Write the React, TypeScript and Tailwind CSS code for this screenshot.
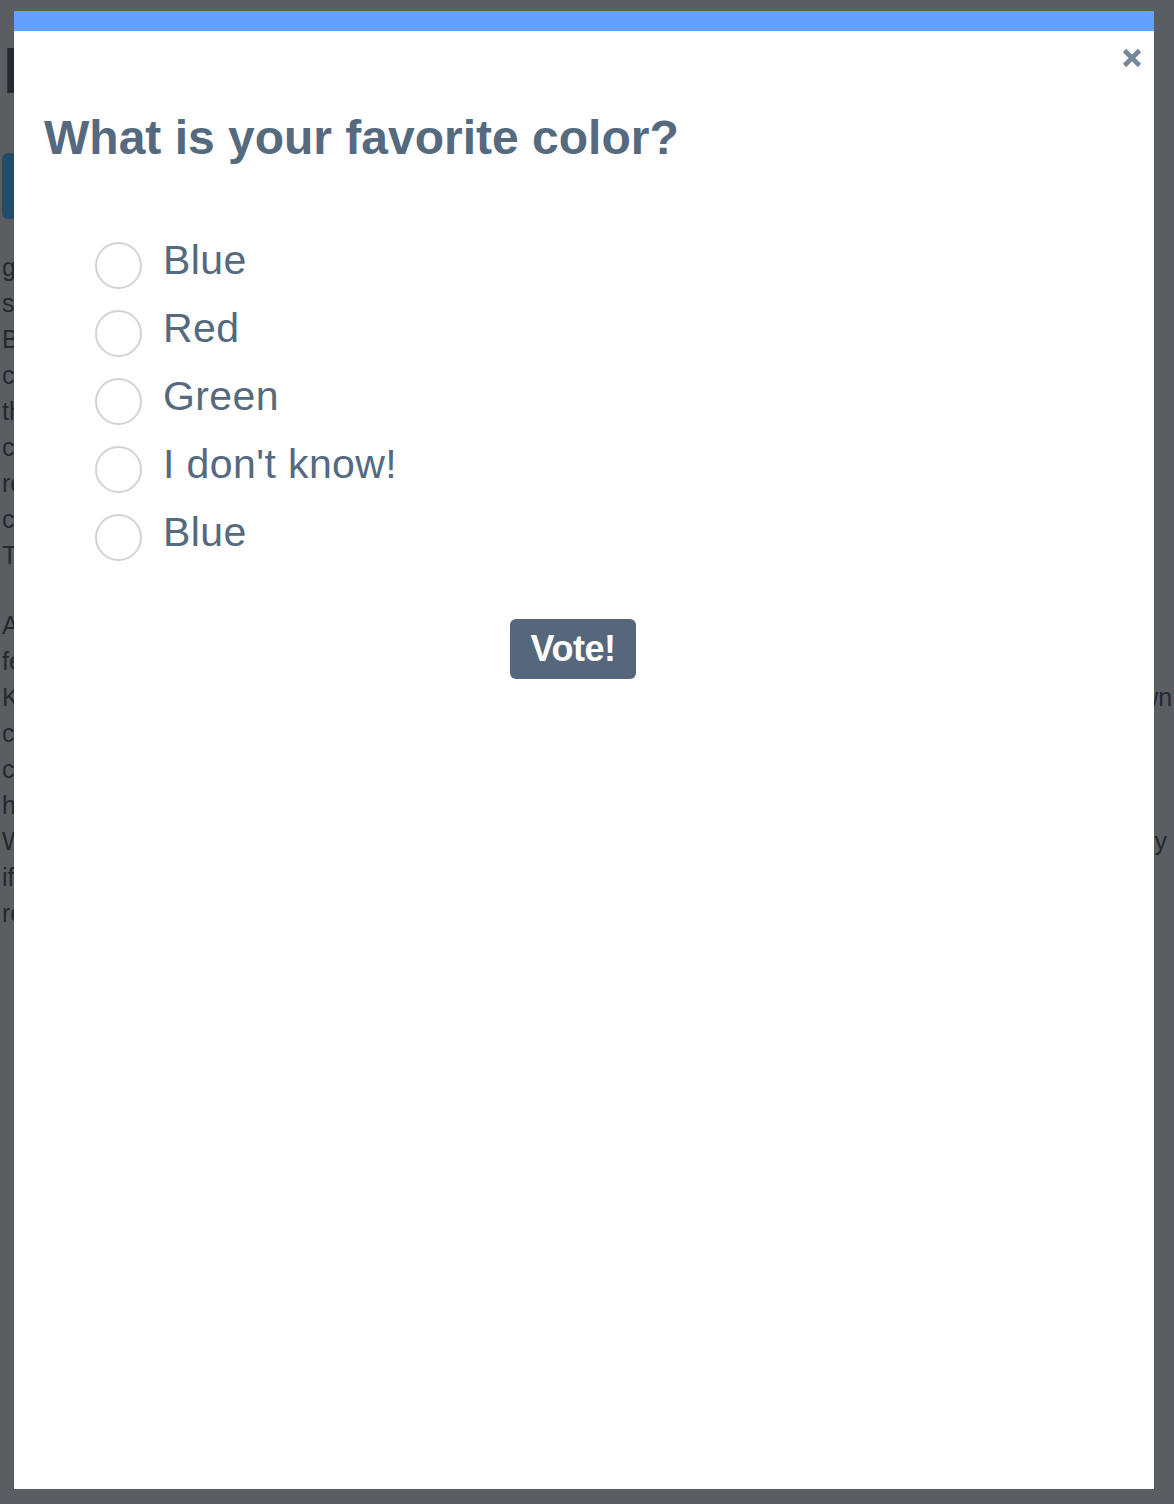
import React from "react";

const options = ["Blue", "Red", "Green", "I don't know!", "Blue"];

// lines of the page behind the modal, only their edges show
const firstParagraph = [
	"guests are welcome to join the conversation and share",
	"some thoughts about the colors they like the most.",
	"Bright shades are popular, but calm tones win often.",
	"colors can change the mood of a whole room quickly.",
	"the results of the last poll were surprising to most of the people who took part in it, and so, we did it all",
	"can you guess which one came out on top this time?",
	"results will be published right after the vote ends.",
	"come back later and see how your choice compares.",
	"Thanks for taking part in this little experiment.",
];

const secondParagraph = [
	"All answers are anonymous and nothing is stored.",
	"feel free to vote as often as you like, really.",
	"Keep in mind that the poll closes at the end of the week, so do not wait too long before you vote in an own",
	"colors are a matter of taste, there is no wrong one.",
	"choose the one that speaks to you the most today.",
	"have fun and share the poll with your friends too.",
	"We hope you enjoy it and find the results interesting and fun to read, because we surely did it this way, by",
	"if you have an idea for the next poll, let us know.",
	"remember to check back soon for new questions.",
];

const RadioRow = ({ label, checked, onSelect }: { label: string; checked: boolean; onSelect: () => void }) => {
	return (
		<label className="flex h-[68px] cursor-pointer items-center gap-[21px]" onClick={onSelect}>
			<span className="flex h-[47px] w-[47px] shrink-0 items-center justify-center rounded-full border-2 border-[#d3d3d3] bg-white">
				{checked && <span className="h-[21px] w-[21px] rounded-full bg-[#55697f]" />}
			</span>
			<span className="pb-[10px] text-[41px] leading-none tracking-[0.4px] text-[#55697f]">{label}</span>
		</label>
	);
};

const App = () => {
	const [selected, setSelected] = React.useState<number | null>(null);

	return (
		<div
			className="relative h-[1504px] w-full overflow-hidden bg-[#5a5e62]"
			style={{ fontFamily: '"Liberation Sans", Arial, sans-serif' }}
		>
			{/* *** page behind the overlay *** */}
			<div className="pl-[2px] text-[#23292f]">
				<h1 className="pt-[39px] pl-[1px] text-[64px] font-bold leading-none">Polls for everyone</h1>
				<div className="mt-[50px] flex h-[66px] w-[220px] items-center justify-center rounded-md bg-[#234b6b] text-[24px] text-[#5a6b78]">
					Start
				</div>
				<div className="mt-[30px] text-[25px] leading-[36px] whitespace-nowrap">
					{firstParagraph.map((line, i) => (
						<div key={i}>{line}</div>
					))}
				</div>
				<div className="mt-[34px] text-[25px] leading-[36px] whitespace-nowrap">
					{secondParagraph.map((line, i) => (
						<div key={i}>{line}</div>
					))}
				</div>
			</div>

			{/* *** modal *** */}
			<div className="absolute top-[11px] left-[14px] h-[1478px] w-[1140px] border-t-[20px] border-[#64a0ff] bg-white">
				<button className="absolute top-[16px] right-[11px] flex h-[22px] w-[22px] items-center justify-center">
					<svg viewBox="0 0 22 22" className="h-[22px] w-[22px]">
						<path d="M3.5 3.5 L18.5 18.5 M18.5 3.5 L3.5 18.5" stroke="#76879a" strokeWidth="4.6" />
					</svg>
				</button>

				<div className="pt-[83px] pr-[52px] pl-[30px]">
					<h2 className="text-[48px] leading-none font-bold text-[#55697f]">What is your favorite color?</h2>

					<div className="mt-[69px] pl-[51px]">
						{options.map((option, i) => (
							<RadioRow key={i} label={option} checked={selected === i} onSelect={() => setSelected(i)} />
						))}
					</div>

					<div className="mt-[48px] flex justify-center">
						<button className="flex h-[60px] w-[126px] items-center justify-center rounded-[6px] bg-[#56677b] text-[36px] leading-none font-bold tracking-[-0.5px] text-white">
							Vote!
						</button>
					</div>
				</div>
			</div>
		</div>
	);
};

export default App;
